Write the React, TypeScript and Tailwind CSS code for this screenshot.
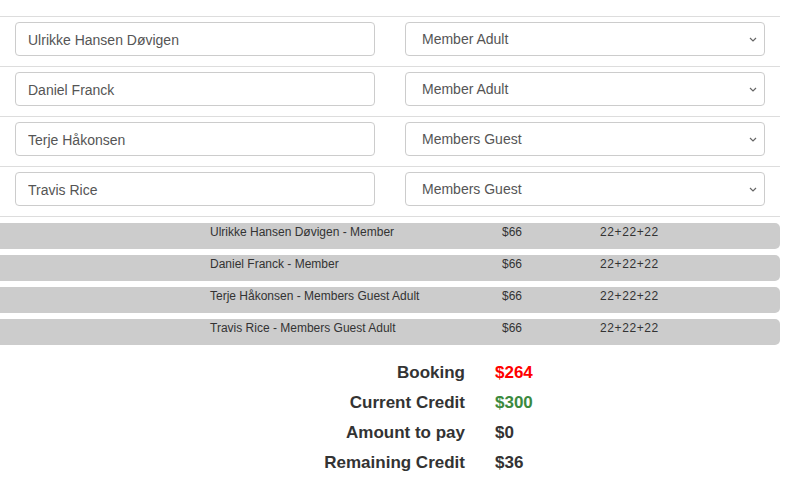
import { useState } from "react";

const guests = [
  { name: "Ulrikke Hansen Døvigen", type: "Member Adult", label: "Member" },
  { name: "Daniel Franck", type: "Member Adult", label: "Member" },
  { name: "Terje Håkonsen", type: "Members Guest", label: "Members Guest Adult" },
  { name: "Travis Rice", type: "Members Guest", label: "Members Guest Adult" },
];

const options = ["Member Adult", "Members Guest", "Member Junior"];

const Chevron = () => (
  <svg width="8" height="5" viewBox="0 0 8 5" className="pointer-events-none absolute right-[8px] top-[15px]">
    <path d="M1 1 L4 4 L7 1" fill="none" stroke="#666" strokeWidth="1.2" />
  </svg>
);

export default function App() {
  const [rows, setRows] = useState(guests);

  const handleChange = (i: number, field: "name" | "type", value: string) => {
    setRows((prev) => prev.map((r, idx) => (idx === i ? { ...r, [field]: value } : r)));
  };

  return (
    <div className="w-[780px] bg-white pt-[16px] font-['Liberation_Sans',Arial,sans-serif]">
      {rows.map((row, i) => (
        <div key={i} className="flex gap-[30px] border-t border-[#dddddd] px-[15px] pt-[5px] pb-[10px]">
          <input
            type="text"
            value={row.name}
            onChange={(e) => handleChange(i, "name", e.target.value)}
            className="h-[34px] w-[360px] rounded-[4px] border border-[#cccccc] px-[12px] pt-[1px] text-[14px] text-[#555555] outline-none"
          />
          <div className="relative w-[360px]">
            <select
              value={row.type}
              onChange={(e) => handleChange(i, "type", e.target.value)}
              className="h-[34px] w-full appearance-none rounded-[4px] border border-[#cccccc] bg-white px-[16px] pt-[1px] text-[14px] text-[#555555] outline-none"
            >
              {options.map((o) => (
                <option key={o} value={o}>
                  {o}
                </option>
              ))}
            </select>
            <Chevron />
          </div>
        </div>
      ))}

      <div className="flex flex-col gap-[6px] border-t border-[#dddddd] pt-[6px]">
        {rows.map((row, i) => (
          <div
            key={i}
            className="flex h-[26px] rounded-r-[5px] bg-[#cccccc] pl-[210px] pt-[1px] text-[12px] leading-[16px] text-[#333333]"
          >
            <span className="w-[292px]">
              {row.name} - {row.label}
            </span>
            <span className="w-[98px]">$66</span>
            <span className="tracking-[0.6px]">22+22+22</span>
          </div>
        ))}
      </div>

      <div className="mt-[13px] flex flex-col text-[17px] font-bold leading-[30px] text-[#333333]">
        {[
          ["Booking", "$264", "text-[#ff0000]"],
          ["Current Credit", "$300", "text-[#3b8a3e]"],
          ["Amount to pay", "$0", ""],
          ["Remaining Credit", "$36", ""],
        ].map(([label, value, color]) => (
          <div key={label} className="flex">
            <span className="w-[465px] text-right">{label}</span>
            <span className={`pl-[30px] ${color}`}>{value}</span>
          </div>
        ))}
      </div>
    </div>
  );
}
